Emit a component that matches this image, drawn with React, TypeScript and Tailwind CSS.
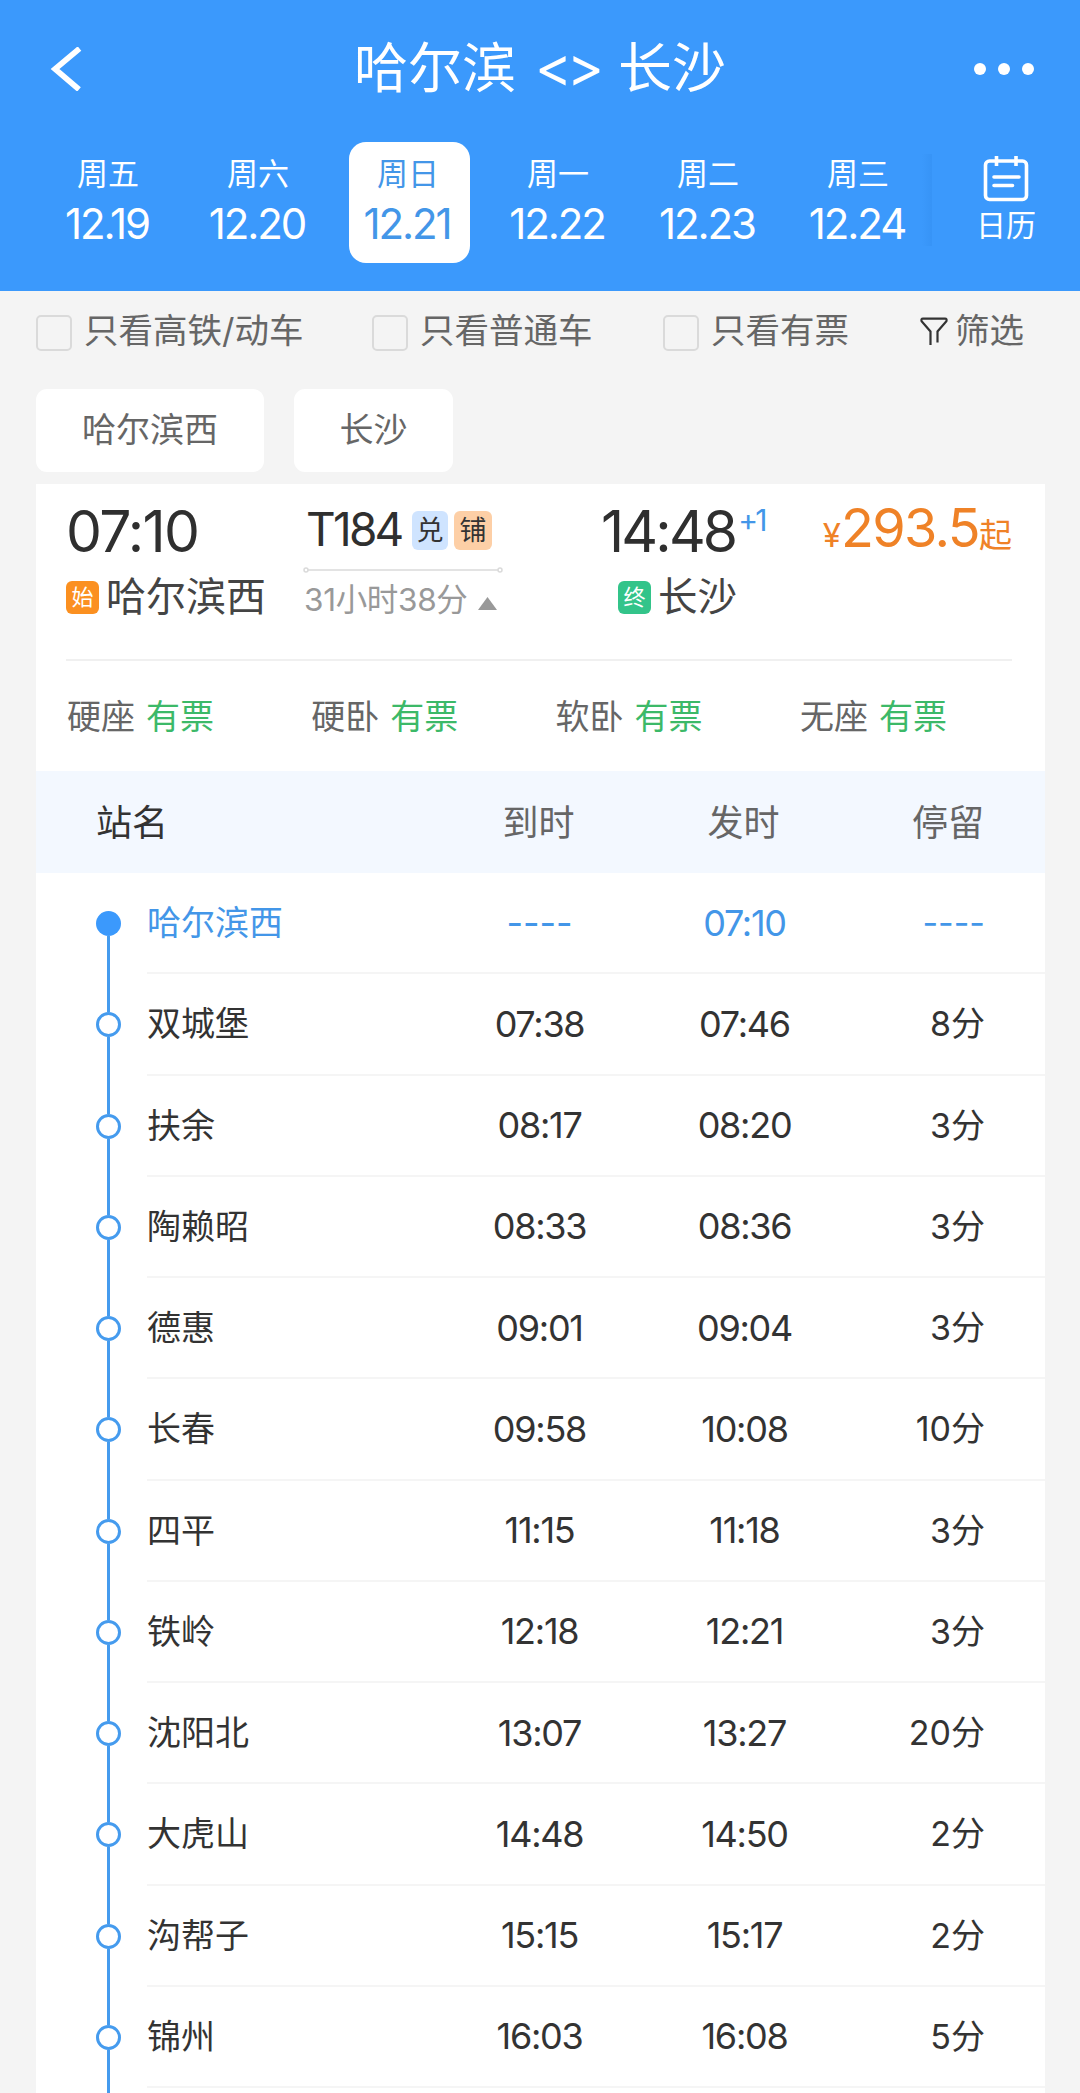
import clsx from "clsx";

const days = [
  { week: "周五", date: "12.19" },
  { week: "周六", date: "12.20" },
  { week: "周日", date: "12.21", active: true },
  { week: "周一", date: "12.22" },
  { week: "周二", date: "12.23" },
  { week: "周三", date: "12.24" },
];

const seats = ["硬座", "硬卧", "软卧", "无座"];

const stops = [
  { name: "哈尔滨西", arrive: "----", depart: "07:10", stay: "----" },
  { name: "双城堡", arrive: "07:38", depart: "07:46", stay: "8分" },
  { name: "扶余", arrive: "08:17", depart: "08:20", stay: "3分" },
  { name: "陶赖昭", arrive: "08:33", depart: "08:36", stay: "3分" },
  { name: "德惠", arrive: "09:01", depart: "09:04", stay: "3分" },
  { name: "长春", arrive: "09:58", depart: "10:08", stay: "10分" },
  { name: "四平", arrive: "11:15", depart: "11:18", stay: "3分" },
  { name: "铁岭", arrive: "12:18", depart: "12:21", stay: "3分" },
  { name: "沈阳北", arrive: "13:07", depart: "13:27", stay: "20分" },
  { name: "大虎山", arrive: "14:48", depart: "14:50", stay: "2分" },
  { name: "沟帮子", arrive: "15:15", depart: "15:17", stay: "2分" },
  { name: "锦州", arrive: "16:03", depart: "16:08", stay: "5分" },
];

function CalendarIcon() {
  return (
    <svg width="46" height="46" viewBox="0 0 46 46" fill="none" stroke="#fff" strokeWidth="3.6">
      <rect x="2.5" y="5" width="41" height="38.5" rx="4" />
      <path d="M13.5 0v10M33 0v10" />
      <path d="M11 21h25M11 29.5h18.5" strokeLinecap="round" />
    </svg>
  );
}

function FunnelIcon() {
  return (
    <svg width="28" height="29" viewBox="0 0 28 29" fill="none" stroke="#333" strokeWidth="2.2">
      <path d="M10.5 28V14.5L1.6 4.2Q.8 1.6 3 1.6H25Q27.2 1.6 26.4 4.2L17.5 14.5V25.5" />
    </svg>
  );
}

/** Шапка: маршрут и выбор даты */
function Header() {
  return (
    <header className="h-[291px] bg-[#3b99fc] text-white">
      <div className="flex h-[137px] items-center justify-between pr-[46px] pl-[50px]">
        <svg width="32" height="44" viewBox="0 0 32 44" fill="none" stroke="#fff" strokeWidth="5.6">
          <path d="M29.5 1.5L5 22L29 42.5" />
        </svg>
        <h1 className="ml-[24px] flex items-center gap-[17px] text-[54px] leading-none">
          <span>哈尔滨</span>
          <span className="w-[68px] pb-[4px] text-center text-[56px] tracking-[-0.09em]">&lt;&gt;</span>
          <span>长沙</span>
        </h1>
        <svg width="60" height="14" viewBox="0 0 60 14" fill="#fff">
          <circle cx="6" cy="7" r="6" />
          <circle cx="30" cy="7" r="6" />
          <circle cx="54" cy="7" r="6" />
        </svg>
      </div>

      <div className="flex pt-[5px] pl-[34px]">
        {days.map((d) => (
          <div key={d.date} className="flex w-[150px] justify-center">
            <div
              className={clsx(
                "flex h-[121px] w-[121px] flex-col items-center rounded-[17px] pt-[16px]",
                d.active && "bg-white text-[#4396e8]",
              )}
            >
              <span className="mr-[2px] text-[31px] leading-[32px]">{d.week}</span>
              <span className="mt-[14px] mr-[4px] text-[42px] leading-[40px] tracking-[-0.05em]">{d.date}</span>
            </div>
          </div>
        ))}
        <div className="-ml-[12px] mt-[12px] h-[92px] w-[10px] bg-gradient-to-l from-[#3490f2] to-[#3b99fc] opacity-60" />
        <div className="flex flex-1 flex-col items-center pt-[14px]">
          <CalendarIcon />
          <span className="mt-[7px] text-[30px] leading-[32px]">日历</span>
        </div>
      </div>
    </header>
  );
}

function Check({ label, className }: { label: string; className?: string }) {
  return (
    <label className={clsx("flex items-center", className)}>
      <span className="mt-[4px] mr-[12px] h-[36px] w-[36px] rounded-[5px] border-[2.5px] border-[#dadada]" />
      <span>{label}</span>
    </label>
  );
}

/** Карточка поезда */
function TrainCard() {
  return (
    <section className="h-[287px] bg-white pr-[33px] pl-[30px]">
      <div className="flex h-[175px] pt-[22px]">
        <div className="w-[237px]">
          <div className="text-[57px] leading-[52px] tracking-[-0.03em] text-[#2f2f2f]">07:10</div>
          <div className="mt-[16px] flex items-center text-[40px] leading-[46px] text-[#444]">
            <span className="mr-[7px] flex h-[33px] w-[33px] shrink-0 items-center justify-center rounded-[6px] bg-[#fb9020] text-[22px] leading-none text-white">
              始
            </span>
            <span className="whitespace-nowrap">哈尔滨西</span>
          </div>
        </div>

        <div className="w-[200px]">
          <div className="flex items-center gap-[6px] pl-[3px]">
            <span className="w-[100px] text-[46px] leading-[46px] tracking-[-0.06em] text-[#2f2f2f]">T184</span>
            <span className="mt-[3px] flex h-[39px] w-[36px] items-center justify-center rounded-[6px] bg-[#cfe4ff] text-[27px] leading-none text-[#333]">
              兑
            </span>
            <span className="mt-[3px] flex h-[39px] w-[38px] items-center justify-center rounded-[6px] bg-[#fdcfa6] text-[27px] leading-none text-[#333]">
              铺
            </span>
          </div>
          <svg className="mt-[15px] block" width="200" height="6" viewBox="0 0 200 6" fill="none" stroke="#dadada" strokeWidth="1.5">
            <path d="M5 3H195" />
            <circle cx="3" cy="3" r="2" />
            <circle cx="197" cy="3" r="2" />
          </svg>
          <div className="mt-[7px] flex items-center justify-between pr-[6px] pl-px text-[31.5px] leading-[40px] tracking-[-0.01em] text-[#999]">
            <span className="whitespace-nowrap">31小时38分</span>
            <svg className="mt-[6px]" width="19" height="13" viewBox="0 0 19 13" fill="#999">
              <path d="M9.5 0L19 13H0z" />
            </svg>
          </div>
        </div>

        <div className="w-[280px] pl-[98px]">
          <div className="flex text-[57px] leading-[52px] tracking-[-0.05em] text-[#2f2f2f]">
            14:48
            <span className="ml-[3px] text-[30px] leading-[28px] text-[#4396e8]">+1</span>
          </div>
          <div className="mt-[16px] flex items-center pl-[17px] text-[39.5px] leading-[46px] text-[#444]">
            <span className="mr-[7px] flex h-[33px] w-[33px] shrink-0 items-center justify-center rounded-[6px] bg-[#33c48a] text-[22px] leading-none text-white">
              终
            </span>
            <span>长沙</span>
          </div>
        </div>

        <div className="flex flex-1 items-baseline justify-end text-[33px] leading-[44px] text-[#ef8227]">
          <span>¥</span>
          <span className="text-[54px] tracking-[-0.03em]">293.5</span>
          <span>起</span>
        </div>
      </div>

      <div className="flex border-t-2 border-[#f0f0f0] pt-[33px] pl-px text-[34px] leading-[46px] text-[#666]">
        {seats.map((s) => (
          <div key={s} className="flex w-[244.3px] shrink-0 gap-[11px]">
            <span>{s}</span>
            <span className="text-[#3cb968]">有票</span>
          </div>
        ))}
      </div>
    </section>
  );
}

/** Остановки поезда */
function StopTable() {
  return (
    <section className="bg-white">
      <div className="flex h-[102px] items-center bg-[#f3f8ff] pr-[61px] pl-[60px] text-[36px] text-[#666]">
        <span className="flex-1 pt-[2px] text-[#333]">站名</span>
        <span className="w-[205px] pt-[2px] text-center">到时</span>
        <span className="w-[205px] pt-[2px] text-center">发时</span>
        <span className="w-[138px] pt-[2px] text-right">停留</span>
      </div>
      {stops.map((s, i) => (
        <div key={s.name} className={clsx("flex h-[101.25px]", i === 0 ? "text-[#4396e8]" : "text-[#333]")}>
          <div className="ml-[60px] flex w-[25px] flex-col items-center">
            <span className={clsx("w-[3px] flex-1", i > 0 && "bg-[#459bee]")} />
            <span
              className={clsx(
                "h-[25px] w-[25px] rounded-full border-[#459bee]",
                i === 0 ? "bg-[#3b99fc]" : "border-[3px] bg-white",
              )}
            />
            <span className="w-[3px] flex-1 bg-[#459bee]" />
          </div>
          <div className="ml-[26px] flex flex-1 items-center border-b-2 border-[#f5f5f5] pr-[60px] text-[34px]">
            <span className="flex-1">{s.name}</span>
            <span className={clsx("w-[205px] text-center text-[36px]", i > 0 && "tracking-[-0.035em]")}>{s.arrive}</span>
            <span className="w-[205px] text-center text-[36px] tracking-[-0.035em]">{s.depart}</span>
            <span className="w-[138px] text-right">{s.stay}</span>
          </div>
        </div>
      ))}
      {/* Линия уходит к следующей остановке за экраном */}
      <div className="ml-[71px] h-[20px] w-[3px] bg-[#459bee]" />
    </section>
  );
}

export default function App() {
  return (
    <div className="h-[2093px] w-[1080px] overflow-hidden bg-[#f4f4f4] font-['Inter','Noto_Sans_CJK_SC',sans-serif]">
      <Header />

      {/* Фильтры */}
      <div className="flex h-[98px] items-start pt-[17px] pl-[36px] text-[34.5px] leading-[46px] whitespace-nowrap text-[#666]">
        <Check label="只看高铁/动车" className="w-[336px]" />
        <Check label="只看普通车" className="w-[291px]" />
        <Check label="只看有票" className="w-[257px]" />
        <div className="flex items-center gap-[7px]">
          <FunnelIcon />
          <span>筛选</span>
        </div>
      </div>

      {/* Станции */}
      <div className="flex h-[95px] gap-[30px] pl-[36px] text-[34px] text-[#666]">
        <div className="flex h-[83px] w-[228px] items-center justify-center rounded-[11px] bg-white pb-[3px]">哈尔滨西</div>
        <div className="flex h-[83px] w-[159px] items-center justify-center rounded-[11px] bg-white pb-[3px]">长沙</div>
      </div>

      <main className="mr-[35px] ml-[36px]">
        <TrainCard />
        <StopTable />
      </main>
    </div>
  );
}
